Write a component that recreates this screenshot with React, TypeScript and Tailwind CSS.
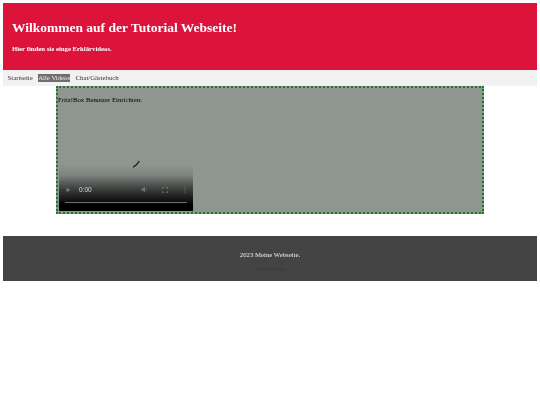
export default function App() {
  return (
    <div className="min-h-[405px] bg-white px-[3.4px] pt-[3.4px] font-['Liberation_Serif',serif] text-[6.75px] leading-[8px] text-black blur-[0.3px]">
      <header className="h-[66.6px] bg-[#dc143c] pl-[8.6px] pt-[17px] text-white">
        <h1 className="text-[13.5px] leading-[16px] font-bold">Wilkommen auf der Tutorial Webseite!</h1>
        <p className="mt-[9px] font-bold">Hier finden sie einge Erklärvideos.</p>
      </header>
      <nav className="flex h-[16px] items-center bg-[#f1f1f1] pl-[4.2px] text-[#333]">
        <a>Startseite</a>
        <a className="ml-[5.5px] bg-[#6e6e6e] text-[#eee]">Alle Videos</a>
        <a className="ml-[5.5px]">Chat/Gästebuch</a>
      </nav>
      <main className="mx-auto h-[128px] w-[428px] border-[2px] border-dotted border-[#1c7c1c] bg-[#8f9691]">
        <p className="pt-[8px]">Fritz!Box Benutzer Einrichten:</p>
        <div className="relative ml-px mt-[1px] h-[106px] w-[134px] bg-[linear-gradient(to_bottom,transparent_0%,transparent_56%,rgba(0,0,0,0.12)_66%,rgba(0,0,0,0.6)_80%,#000_94%)]">
          <svg className="absolute left-[73px] top-[54px]" width="10" height="10" viewBox="0 0 10 10">
            <path d="M1.5 8 Q4.5 6.5 7 2.5" fill="none" stroke="#111" strokeWidth="1.3" strokeLinecap="round" />
          </svg>
          <div className="absolute left-[7px] top-[81px] flex w-[121px] items-center font-['Liberation_Sans',sans-serif] text-[6.5px] text-[#ddd]">
            <svg width="5" height="6" viewBox="0 0 5 6"><path d="M0.5 0.5 L4.5 3 L0.5 5.5Z" fill="#777" /></svg>
            <span className="ml-[8px]">0:00</span>
            <svg className="ml-[49px]" width="7" height="7" viewBox="0 0 7 7"><path d="M0.5 2.5H2L4 1V6L2 4.5H0.5Z" fill="#777" /><path d="M5 2.2Q6 3.5 5 4.8" fill="none" stroke="#777" strokeWidth="0.7" /></svg>
            <svg className="ml-[14px]" width="6" height="6" viewBox="0 0 6 6"><path d="M0.5 2V0.5H2M4 0.5H5.5V2M5.5 4V5.5H4M2 5.5H0.5V4" fill="none" stroke="#777" strokeWidth="0.8" /></svg>
            <svg className="ml-[16px]" width="2" height="7" viewBox="0 0 2 7"><path d="M1 0.5V1.5M1 3V4M1 5.5V6.5" stroke="#888" strokeWidth="0.9" /></svg>
          </div>
          <div className="absolute bottom-[8px] left-[6px] h-px w-[122px] bg-[#6f6f6f]" />
        </div>
      </main>
      <footer className="mt-[22px] flex h-[45px] flex-col items-center bg-[#444] pt-[15px] text-[#eee]">
        <p>2023 Meine Webseite.</p>
        <a className="mt-[6px] text-[#3a3a3a]">Impressum</a>
      </footer>
    </div>
  );
}
